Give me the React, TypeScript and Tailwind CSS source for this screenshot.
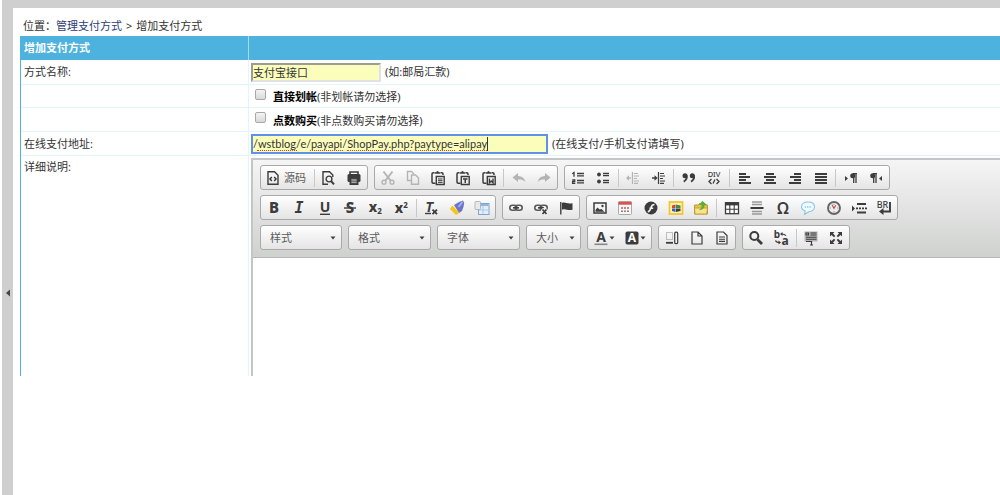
import React from "react";

type Kids = { children: React.ReactNode };

function Icon({ children, dim = false }: Kids & { dim?: boolean }) {
  return (
    <svg
      viewBox="0 0 16 16"
      className={dim ? "size-4 shrink-0 overflow-visible text-[#b4b4b4]" : "size-4 shrink-0 overflow-visible text-[#3c3c3c]"}
      fill="none"
      stroke="currentColor"
      strokeWidth="1.4"
      aria-hidden="true"
    >
      {children}
    </svg>
  );
}

function Tool({ label, children, dim }: Kids & { label: string; dim?: boolean }) {
  return (
    <button type="button" aria-label={label} title={label} className="flex h-full min-w-0 flex-1 items-center justify-center">
      <Icon dim={dim}>{children}</Icon>
    </button>
  );
}

function Sep() {
  return <span className="mx-0.5 h-[18px] w-px shrink-0 bg-[#c8c8c8]" />;
}

function Group({ width, children }: Kids & { width: string }) {
  return (
    <div
      role="group"
      className={`${width} flex h-[25px] shrink-0 items-center rounded-[3px] border border-[#a9a9a9] bg-linear-to-b from-white to-[#e4e4e4]`}
    >
      {children}
    </div>
  );
}

function Combo({ label, width }: { label: string; width: string }) {
  return (
    <button
      type="button"
      aria-haspopup="listbox"
      className={`${width} flex h-[25px] shrink-0 items-center justify-between rounded-[3px] border border-[#a9a9a9] bg-linear-to-b from-white to-[#e4e4e4] pr-[5px] pl-[9px] text-[11px] text-[#5c5c5c]`}
    >
      {label}
      <Caret />
    </button>
  );
}

function Caret() {
  return (
    <svg viewBox="0 0 6 4" className="h-1 w-1.5 shrink-0" aria-hidden="true">
      <path d="M0.5 0.5h5L3 3.5z" fill="#404040" />
    </svg>
  );
}

const glyph = {
  fill: "currentColor",
  stroke: "none",
  textAnchor: "middle" as const,
  fontWeight: 700,
};
const sans = "'Noto Sans', sans-serif";

const clipboard = (
  <>
    <path d="M4.500 2.800H3.200Q2 2.800 2 4v8Q2 13.200 3.200 13.200H5.500M10.500 2.800h1.300Q13 2.800 13 4v1" strokeWidth="1.500" />
    <path d="M4.800 3.800V2.200h1.400Q7.500 0 8.800 2.200h1.400v1.600z" fill="currentColor" stroke="none" />
    <path d="M6.300 6.500h7.900v8H6.300z" />
  </>
);

function Lines({ rows }: { rows: [number, number][] }) {
  return (
    <>
      {rows.map(([x, w], i) => (
        <rect key={i} x={x} y={3 + i * 3} width={w} height="2" fill="currentColor" stroke="none" />
      ))}
    </>
  );
}

function RowOne() {
  return (
    <div className="flex gap-1.5">
      <Group width="w-[108px]">
        <button type="button" className="flex h-full shrink-0 items-center gap-[3px] pl-1 text-[11px] text-[#5c5c5c]">
          <Icon>
            <path d="M3 1.700h6.500L13 5.200v9H3z" />
            <path d="M6.800 7L5 9l1.800 2M9.200 7L11 9l-1.800 2" strokeWidth="1.500" />
          </Icon>
          源码
        </button>
        <span className="ml-2 h-[18px] w-px shrink-0 bg-[#c8c8c8]" />
        <Tool label="预览">
          <path d="M8 14.200H3V1.700h6.500L12.800 5v2" />
          <circle cx="9" cy="9" r="2.900" />
          <path d="M11 11l3 3.300" strokeWidth="2" />
        </Tool>
        <Tool label="打印">
          <path d="M4 4V2h8v2" strokeWidth="1.600" />
          <rect x="1.500" y="4" width="13" height="8" rx="1.500" fill="currentColor" stroke="none" />
          <rect x="4.200" y="8" width="7.600" height="6.300" fill="#555" />
          <path d="M5.500 10h5M5.500 12.200h5" stroke="#ddd" strokeWidth=".9" />
        </Tool>
      </Group>
      <Group width="w-[184px]">
        <Tool label="剪切" dim>
          <path d="M3.500 1.500l7 9M12.500 1.500l-7 9" strokeWidth="2" />
          <circle cx="4" cy="12.200" r="1.900" />
          <circle cx="12" cy="12.200" r="1.900" />
        </Tool>
        <Tool label="复制" dim>
          <path d="M6 10.500H2.500v-9h4L9 4" />
          <path d="M6.500 5h4L13.500 8v6.300h-7z" />
        </Tool>
        <Tool label="粘贴">
          {clipboard}
          <path d="M8 9h4.500M8 10.700h4.500M8 12.400h4.500" strokeWidth="1" />
        </Tool>
        <Tool label="粘贴为无格式文本">
          {clipboard}
          <path d="M8 9h4.500M10.250 9v4" strokeWidth="1.500" />
        </Tool>
        <Tool label="从 Word 粘贴">
          {clipboard}
          <path d="M8.400 8.500v4.200l1.800-1.800 1.800 1.800V8.500" />
        </Tool>
        <Sep />
        <Tool label="撤消" dim>
          <path d="M7 3v3c4 0 6.500 2 7.500 6-2-2-4-2.500-7.500-2.500V12L1.500 7.500z" fill="currentColor" stroke="none" />
        </Tool>
        <Tool label="重做" dim>
          <path d="M9 3v3c-4 0-6.500 2-7.500 6 2-2 4-2.500 7.500-2.500V12l5.500-4.500z" fill="currentColor" stroke="none" />
        </Tool>
      </Group>
      <Group width="w-[326px]">
        <Tool label="编号列表">
          <path d="M2.300 3.800L4 2.500v4.200M2.300 9.800h2.400v1.700H2.600v1.800h2.700" strokeWidth="1.300" />
          <path d="M7 3.500h7M7 5.800h7M7 10.500h7M7 12.800h7" strokeWidth="1.300" />
        </Tool>
        <Tool label="项目列表">
          <circle cx="4" cy="4.500" r="1.900" fill="currentColor" stroke="none" />
          <circle cx="4" cy="11.500" r="1.900" fill="currentColor" stroke="none" />
          <path d="M8 3.500h6M8 5.700h6M8 10.500h6M8 12.700h6" strokeWidth="1.300" />
        </Tool>
        <Sep />
        <Tool label="减少缩进量" dim>
          <path d="M7.500 2v12M9 3.500h4M9 6h5M9 8.500h3M9 11h5M9 13.300h4" strokeWidth="1.200" />
          <path d="M6 8H2" />
          <path d="M4 5.300L1 8l3 2.700z" fill="currentColor" stroke="none" />
        </Tool>
        <Tool label="增加缩进量">
          <path d="M7.500 2v12M9 3.500h4M9 6h5M9 8.500h3M9 11h5M9 13.300h4" strokeWidth="1.200" />
          <path d="M1 8h4" />
          <path d="M3.500 5.300L6.700 8l-3.200 2.700z" fill="currentColor" stroke="none" />
        </Tool>
        <Sep />
        <Tool label="块引用">
          <circle cx="4" cy="5.800" r="2.500" fill="currentColor" stroke="none" />
          <circle cx="11.300" cy="5.800" r="2.500" fill="currentColor" stroke="none" />
          <path d="M5.700 5.500c.4 3-.8 5-3 6.200M13 5.500c.4 3-.8 5-3 6.200" strokeWidth="1.900" />
        </Tool>
        <Tool label="创建 DIV 容器">
          <text x="8" y="7" fontSize="7.500" fontFamily={sans} {...glyph} fontWeight={500}>DIV</text>
          <path d="M5.500 9L3 11.500 5.500 14M10.500 9l2.500 2.500-2.500 2.500M9 9.500l-2 4" strokeWidth="1.300" />
        </Tool>
        <Sep />
        <Tool label="左对齐"><Lines rows={[[2, 7], [2, 11], [2, 7], [2, 12]]} /></Tool>
        <Tool label="居中"><Lines rows={[[4, 8], [2, 12], [4, 8], [2, 12]]} /></Tool>
        <Tool label="右对齐"><Lines rows={[[7, 7], [3, 11], [7, 7], [2, 12]]} /></Tool>
        <Tool label="两端对齐"><Lines rows={[[2, 12], [2, 12], [2, 12], [2, 12]]} /></Tool>
        <Sep />
        <Tool label="文字方向为从左至右">
          <path d="M2 6l3 2.500L2 11z" fill="currentColor" stroke="none" />
          <path d="M10.700 3.500V13M13 3.500V13M14 3.700h-4" strokeWidth="1.300" />
          <circle cx="9.700" cy="5.800" r="2.500" fill="currentColor" stroke="none" />
        </Tool>
        <Tool label="文字方向为从右至左">
          <path d="M14 6l-3 2.500 3 2.500z" fill="currentColor" stroke="none" />
          <path d="M5.700 3.500V13M8 3.500V13M9 3.700H5" strokeWidth="1.300" />
          <circle cx="4.700" cy="5.800" r="2.500" fill="currentColor" stroke="none" />
        </Tool>
      </Group>
    </div>
  );
}

function Chain() {
  return (
    <>
      <rect x="1.800" y="5.300" width="7" height="5" rx="2.500" stroke="#5a5a5a" strokeWidth="1.600" />
      <rect x="7.200" y="5.300" width="7" height="5" rx="2.500" stroke="#5a5a5a" strokeWidth="1.600" />
      <path d="M5 7.800h6" strokeWidth="1.500" />
    </>
  );
}

function RowTwo() {
  return (
    <div className="flex gap-1.5">
      <Group width="w-[236px]">
        <Tool label="加粗"><text x="8" y="13" fontSize="15" fontFamily={sans} {...glyph} fontWeight={800}>B</text></Tool>
        <Tool label="倾斜"><text x="8" y="13" fontSize="15" fontStyle="italic" fontFamily="'DejaVu Sans Mono', monospace" {...glyph}>I</text></Tool>
        <Tool label="下划线">
          <text x="8" y="12" fontSize="14" fontFamily={sans} {...glyph}>U</text>
          <path d="M3 14.300h10" />
        </Tool>
        <Tool label="删除线">
          <text x="8" y="13" fontSize="15" fontFamily={sans} {...glyph} fontWeight={800}>S</text>
          <path d="M2 8h12" />
        </Tool>
        <Tool label="下标">
          <text x="6" y="12" fontSize="14" fontFamily={sans} {...glyph} fontWeight={800}>x</text>
          <text x="12.500" y="14" fontSize="8" fontFamily={sans} {...glyph}>2</text>
        </Tool>
        <Tool label="上标">
          <text x="6" y="13" fontSize="14" fontFamily={sans} {...glyph} fontWeight={800}>x</text>
          <text x="12.500" y="8" fontSize="8" fontFamily={sans} {...glyph}>2</text>
        </Tool>
        <Sep />
        <Tool label="清除格式">
          <text x="6.500" y="12" fontSize="14" fontStyle="italic" fontFamily="'DejaVu Sans Mono', monospace" {...glyph}>T</text>
          <path d="M2 13.500h6" />
          <path d="M9.500 9.700l4.500 4.500M14 9.700l-4.500 4.500" strokeWidth="1.800" />
        </Tool>
        <Tool label="一键排版">
          <path d="M5 5l5-3 4-1.500 1.200 2.200-.7 4L13 11l-3 2z" fill="#6c76c8" stroke="none" />
          <path d="M3.500 5.500L10.500 13l-3.500 2L.8 9z" fill="#f5c61c" stroke="none" />
          <path d="M13.500 1.800L9.500 7" stroke="#aab2ea" strokeWidth="1.800" />
        </Tool>
        <Tool label="模板">
          <rect x="4.500" y="3.500" width="10.500" height="11" fill="#e2effa" stroke="#78a7d4" strokeWidth="1" />
          <path d="M5 5h9.500" stroke="#8fb8e0" strokeWidth="2" />
          <path d="M9 6v8M5 10h9" stroke="#a8c8e8" strokeWidth="1" />
          <rect x="1" y="1.500" width="5.500" height="8" rx="1" fill="#e9e9e9" stroke="#aaa" strokeWidth=".8" />
        </Tool>
      </Group>
      <Group width="w-[78px]">
        <Tool label="插入超链接"><Chain /></Tool>
        <Tool label="取消超链接">
          <Chain />
          <path d="M9 9l5 5.500M14 9l-5 5.500" stroke="#eee" strokeWidth="3.500" />
          <path d="M9.500 9.500l4 4.500M13.500 9.500l-4 4.500" strokeWidth="1.700" />
        </Tool>
        <Tool label="插入锚点">
          <path d="M2.800 2v12.500" />
          <path d="M4 3c3-1.500 5 1.500 10.500.2v6.600C9.500 11 7.500 8 4 9.700z" fill="currentColor" stroke="none" />
        </Tool>
      </Group>
      <Group width="w-[312px]">
        <Tool label="图片">
          <rect x="2" y="3" width="12" height="10" fill="#f5f5f5" strokeWidth="1.500" />
          <path d="M3.500 11.700V10l2-2.500 2 2L9.500 9l3 2.700z" fill="currentColor" stroke="none" />
          <circle cx="10.500" cy="6" r="1.200" fill="currentColor" stroke="none" />
        </Tool>
        <Tool label="日期">
          <rect x="1.500" y="2" width="13" height="12.500" rx="1" fill="#f6f6f6" stroke="#aaa" strokeWidth="1" />
          <path d="M1.500 1.500h13v3.200h-13z" fill="#d05656" stroke="none" />
          <path d="M4 8h8" stroke="#d05656" strokeDasharray="2 1" />
          <path d="M4 11.300h8" stroke="#888" strokeDasharray="2 1" />
        </Tool>
        <Tool label="Flash">
          <circle cx="8" cy="8" r="6.500" fill="currentColor" stroke="none" />
          <path d="M11.500 4.500c-3 0-3 2-3.600 3.500C7.300 10 6.700 11.500 4.800 11.700M6.500 8.300h3.700" stroke="#f3f3f3" strokeWidth="1.600" />
        </Tool>
        <Tool label="多媒体">
          <rect x="1.500" y="2" width="13" height="12" fill="#fbf1c0" stroke="#f6c51e" strokeWidth="1.700" />
          <path d="M4 5.500l3.500-1v3.500H4z" fill="#cc4a2f" stroke="none" />
          <path d="M8 4.500l4.500 1V8H8z" fill="#418a47" stroke="none" />
          <path d="M4 8.500h3.500V12L4 11z" fill="#3263b4" stroke="none" />
          <path d="M8 8.500h4.500V11L8 12z" fill="#3d3d3d" stroke="none" />
        </Tool>
        <Tool label="附件">
          <path d="M1.500 5h4l1-1.500h3.500V5h4.500v9h-13z" fill="#e6c548" stroke="#ae8c26" strokeWidth=".8" />
          <path d="M1.500 8h13l-.8 6H2z" fill="#f8e38b" stroke="#b9972c" strokeWidth=".8" />
          <path d="M9.500 1L14 5h-2.500C11.500 8 9.500 10 6 10 8.700 8.200 8.500 6.500 8.500 5H5.500z" fill="#5cae3c" stroke="none" />
        </Tool>
        <Sep />
        <Tool label="表格">
          <rect x="1.500" y="2.700" width="13" height="11" fill="#fff" strokeWidth="1.300" />
          <path d="M1 4h14" strokeWidth="2.800" />
          <path d="M5.800 4v9.500M10.200 4v9.500M2 9.300h12" strokeWidth="1.100" />
        </Tool>
        <Tool label="水平线">
          <path d="M3 2h10M3 4.500h10M3 11.500h10M3 14h10" stroke="#999" />
          <path d="M1.500 8h13" strokeWidth="2" />
        </Tool>
        <Tool label="特殊符号">
          <text x="8" y="14" fontSize="16" fontFamily="'Noto Sans', sans-serif" {...glyph} fontWeight={600}>Ω</text>
        </Tool>
        <Tool label="表情">
          <path d="M8 2c4.300 0 6.500 2 6.500 4.800S12 11.500 9 11.700L4.500 14.300l.7-3.200C3 10.300 1.500 8.700 1.500 6.800 1.500 4 3.700 2 8 2z" fill="#f2fafe" stroke="#84c8e8" strokeWidth="1.100" />
          <path d="M4.800 7h7" stroke="#84c8e8" strokeWidth="1.300" strokeDasharray="1.300 1" />
        </Tool>
        <Tool label="时间">
          <circle cx="8" cy="8" r="6" fill="#eee" stroke="#666" strokeWidth="1.900" />
          <path d="M8 3.700v1M8 11.300v1M3.700 8h1M11.300 8h1" stroke="#777" strokeWidth="1" />
          <path d="M6 4.700L8 8.300l1.800-3" stroke="#b85050" strokeWidth="1.200" />
        </Tool>
        <Tool label="插入分页符">
          <path d="M1 5.500l3 3-3 3z" fill="currentColor" stroke="none" />
          <path d="M6 4h9M6 12.500h9" strokeWidth="2" />
          <path d="M5 8.300h11" strokeWidth="1.700" strokeDasharray="2 1" />
        </Tool>
        <Tool label="换行">
          <text x="6.500" y="7.500" fontSize="9" fontFamily={sans} {...glyph} fontWeight={500}>BR</text>
          <path d="M14 2v9.500H6" strokeWidth="1.900" />
          <path d="M7.500 8v7L3 11.500z" fill="currentColor" stroke="none" />
        </Tool>
      </Group>
    </div>
  );
}

function RowThree() {
  return (
    <div className="flex gap-1.5">
      <Combo label="样式" width="w-[82px]" />
      <Combo label="格式" width="w-[83px]" />
      <Combo label="字体" width="w-[83px]" />
      <Combo label="大小" width="w-[55px]" />
      <Group width="w-[65px]">
        <button type="button" aria-label="文本颜色" className="flex h-full flex-1 items-center justify-center">
          <Icon>
            <text x="8" y="12" fontSize="14" fontFamily={sans} {...glyph}>A</text>
            <path d="M1.500 14.300h13" stroke="#888" strokeWidth="1.600" />
          </Icon>
          <Caret />
        </button>
        <button type="button" aria-label="背景颜色" className="flex h-full flex-1 items-center justify-center">
          <Icon>
            <rect x="1.500" y="1.500" width="13" height="13" rx="1.800" fill="currentColor" stroke="none" />
            <text x="8" y="12.300" fontSize="12" fontFamily={sans} {...glyph} fill="#fff">A</text>
          </Icon>
          <Caret />
        </button>
      </Group>
      <Group width="w-[78px]">
        <Tool label="显示区块">
          <path d="M2.500 2.500h6v7h-6z" stroke="#888" strokeWidth="1" strokeDasharray="1 1" />
          <path d="M2 12.800h7" strokeWidth="1.800" />
          <rect x="10.700" y="2.200" width="3" height="11.500" rx="1.300" strokeWidth="1.200" />
        </Tool>
        <Tool label="新建">
          <path d="M3 2h6l4 4v8H3zM9 2v4h4" strokeWidth="1.200" />
        </Tool>
        <Tool label="文档属性">
          <path d="M3 2h6.500L13 5.500V14H3z" strokeWidth="1.200" />
          <path d="M5 7h6M5 9.200h6M5 11.400h6" strokeWidth="1.100" />
        </Tool>
      </Group>
      <Group width="w-[108px]">
        <Tool label="查找">
          <circle cx="6.300" cy="6" r="4" strokeWidth="2" />
          <path d="M9.500 9.500l4.500 4.500" strokeWidth="2.800" />
        </Tool>
        <Tool label="替换">
          <text x="3.800" y="8" fontSize="10" fontFamily={sans} {...glyph}>b</text>
          <text x="12" y="14.500" fontSize="12" fontFamily={sans} {...glyph}>a</text>
          <path d="M13 5.800C12 4.200 10.500 4 8.500 4M2.500 10.500c.5 1.800 2 2 4 2" strokeWidth="1.100" />
          <path d="M9.500 2L7 4l2.500 2zM5.500 10.500l2.500 2-2.500 2z" fill="currentColor" stroke="none" />
        </Tool>
        <Sep />
        <Tool label="全选">
          <rect x="1.500" y="1.500" width="13" height="10" fill="#b4b4b4" stroke="none" />
          <path d="M3 3h2.500v2H3zM7.500 3h6M7.500 5h6M3 7.200h10.500M3 9.300h10.500M3 11.500h5" strokeWidth="1.100" />
          <path d="M8.500 11v4M7 15h3" strokeWidth="1.200" />
        </Tool>
        <Tool label="全屏">
          <path d="M2 2h4.500L5 3.500 7.300 6 6 7.300 3.500 5 2 6.500zM14 2v4.500L12.500 5 10 7.300 8.700 6 11 3.500 9.500 2zM2 14V9.500L3.500 11 6 8.700 7.300 10 5 12.500 6.500 14zM14 14H9.500l1.500-1.500L8.700 10 10 8.700l2.500 2.300L14 9.500z" fill="currentColor" stroke="none" />
        </Tool>
      </Group>
    </div>
  );
}

function Row({ label, height, children }: Kids & { label: React.ReactNode; height: string }) {
  return (
    <div className={`${height} grid grid-cols-[228px_1fr] border-b border-[#e2f5fc]`}>
      <div className="flex items-center border-r border-[#e2f5fc] pl-[3px]">{label}</div>
      <div className="flex items-center pl-[2px]">{children}</div>
    </div>
  );
}

function CheckRow({ id, name, note, height }: { id: string; name: string; note: string; height: string }) {
  return (
    <Row label={null} height={height}>
      <input
        id={id}
        type="checkbox"
        className="mr-[7px] mb-1 ml-1 size-[11px] appearance-none rounded-[2px] border border-[#a8a8a8] bg-linear-to-b from-[#f4f4f4] to-[#d9d9d9]"
      />
      <label htmlFor={id} className="pt-0.5">
        <b className="text-black">{name}</b>
        {note}
      </label>
    </Row>
  );
}

const misspelt = ["ml-1 w-10", "ml-[13px] w-[33px]", "ml-1 w-16", "ml-1 w-[40px]", "ml-1 w-7"];

export default function App() {
  return (
    <div className="flex min-h-screen overflow-hidden border-l-2 border-white bg-[#cfcfcf] font-['Noto_Sans','Noto_Sans_CJK_SC',sans-serif] text-[11px] leading-[18px] text-[#333]">
      <div className="w-[11px] shrink-0 pt-[284px]">
        <button type="button" aria-label="收起菜单" className="flex h-[18px] w-full items-center justify-center">
          <svg viewBox="0 0 4 8" className="h-2 w-1" aria-hidden="true">
            <path d="M4 0.500v7L0 4z" fill="#444" />
          </svg>
        </button>
      </div>

      <main className="mt-2 min-w-0 flex-1 bg-white pl-[7px]">
        <nav className="flex gap-1 pt-[9px] pb-px pl-[3px]">
          <span className="-mr-1">位置：</span>
          <a href="#list" className="text-[#2b3c78]">管理支付方式</a>
          <span>&gt;</span>
          <span>增加支付方式</span>
        </nav>

        <form className="border-l border-[#4eb2df]">
          <div className="grid h-6 grid-cols-[228px_1fr] bg-[#4eb2df]">
            <h1 className="flex items-center border-r border-[#a4dbf2] pl-[3px] font-bold text-white">增加支付方式</h1>
          </div>

          <Row label={<label htmlFor="name">方式名称:</label>} height="h-[25px]">
            <input
              id="name"
              defaultValue="支付宝接口"
              className="mr-1 h-[19px] w-[130px] border-2 border-t-[#9c9c94] border-r-[#e2e2e2] border-b-[#e2e2e2] border-l-[#9c9c94] bg-[#fbfdbb] outline-none"
            />
            (如:邮局汇款)
          </Row>
          <CheckRow id="direct" name="直接划帐" note="(非划帐请勿选择)" height="h-[23px]" />
          <CheckRow id="points" name="点数购买" note="(非点数购买请勿选择)" height="h-6" />
          <Row label={<label htmlFor="url">在线支付地址:</label>} height="h-6">
            <div className="relative mr-1 flex">
              <input
                id="url"
                defaultValue="/wstblog/e/payapi/ShopPay.php?paytype=alipay"
                className="h-5 w-[297px] border-2 border-[#5f92e6] bg-[#fbfdbb] font-['Lato',sans-serif] text-[11px] outline-none"
              />
              <div aria-hidden="true" className="pointer-events-none absolute bottom-[3px] left-0.5 flex h-3.5">
                {misspelt.map((w) => (
                  <span key={w} className={`${w} border-b border-dotted border-[#e0402a]`} />
                ))}
                <span className="w-px bg-[#333]" />
              </div>
            </div>
            (在线支付/手机支付请填写)
          </Row>

          <div className="grid grid-cols-[228px_1fr]">
            <div className="border-r border-[#e2f5fc] pt-0.5 pl-[3px]">
              <span id="detail-label">详细说明:</span>
            </div>
            <div className="min-w-0 pt-0.5 pl-[2px]">
              <section aria-labelledby="detail-label" className="overflow-hidden border-t-2 border-l-2 border-[#c3c5c6]">
                <div
                  role="toolbar"
                  className="flex flex-col gap-[5px] border-b border-[#b6b6b6] bg-linear-to-b from-[#f5f5f5] to-[#cfd1cf] pt-[5px] pb-[7px] pl-[7px]"
                >
                  <RowOne />
                  <RowTwo />
                  <RowThree />
                </div>
                <textarea aria-labelledby="detail-label" className="block h-[118px] w-full resize-none bg-white p-2 outline-none" />
              </section>
            </div>
          </div>
        </form>
      </main>
    </div>
  );
}
